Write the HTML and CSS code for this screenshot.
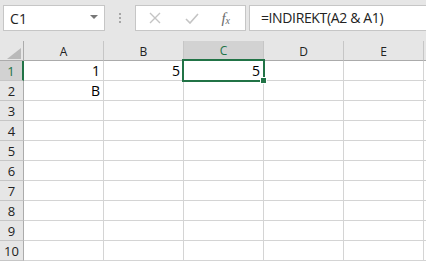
FILE: index.html
```html
<!DOCTYPE html>
<html>
<head>
<meta charset="utf-8">
<link rel="stylesheet" href="styles.css">
</head>
<body>
<div class="app">
  <div class="toolbar">
    <div class="namebox">
      <span class="name">C1</span>
      <svg class="dd" width="8" height="4" viewBox="0 0 8 4"><polygon points="0,0 8,0 4,4" fill="#777"/></svg>
    </div>
    <div class="sep"><span></span><span></span><span></span></div>
    <div class="fbtns">
      <svg class="ic-x" width="12" height="12" viewBox="0 0 12 12"><path d="M1 1 L11 11 M11 1 L1 11" stroke="#c4c4c4" stroke-width="1.4" fill="none"/></svg>
      <svg class="ic-ok" width="14" height="11" viewBox="0 0 14 11"><path d="M1 6 L5 10 L13 1" stroke="#c4c4c4" stroke-width="1.6" fill="none"/></svg>
      <span class="fx">f<sub>x</sub></span>
    </div>
    <div class="formula">=INDIREKT(A2 &amp; A1)</div>
  </div>
  <div class="sheet">
    <div class="grid">
      <div class="hd corner"><svg width="14" height="11" viewBox="0 0 14 11"><polygon points="14,0 14,11 0,11" fill="#b9b9b9"/></svg></div>
      <div class="hd col">A</div>
      <div class="hd col">B</div>
      <div class="hd col sel">C</div>
      <div class="hd col">D</div>
      <div class="hd col">E</div>
      <div class="hd col last"></div>

      <div class="hd row rsel">1</div>
      <div class="c">1</div><div class="c">5</div><div class="c">5</div><div class="c"></div><div class="c"></div><div class="c last"></div>

      <div class="hd row">2</div>
      <div class="c">B</div><div class="c"></div><div class="c"></div><div class="c"></div><div class="c"></div><div class="c last"></div>

      <div class="hd row">3</div>
      <div class="c"></div><div class="c"></div><div class="c"></div><div class="c"></div><div class="c"></div><div class="c last"></div>

      <div class="hd row">4</div>
      <div class="c"></div><div class="c"></div><div class="c"></div><div class="c"></div><div class="c"></div><div class="c last"></div>

      <div class="hd row">5</div>
      <div class="c"></div><div class="c"></div><div class="c"></div><div class="c"></div><div class="c"></div><div class="c last"></div>

      <div class="hd row">6</div>
      <div class="c"></div><div class="c"></div><div class="c"></div><div class="c"></div><div class="c"></div><div class="c last"></div>

      <div class="hd row">7</div>
      <div class="c"></div><div class="c"></div><div class="c"></div><div class="c"></div><div class="c"></div><div class="c last"></div>

      <div class="hd row">8</div>
      <div class="c"></div><div class="c"></div><div class="c"></div><div class="c"></div><div class="c"></div><div class="c last"></div>

      <div class="hd row">9</div>
      <div class="c"></div><div class="c"></div><div class="c"></div><div class="c"></div><div class="c"></div><div class="c last"></div>

      <div class="hd row">10</div>
      <div class="c"></div><div class="c"></div><div class="c"></div><div class="c"></div><div class="c"></div><div class="c last"></div>
    </div>
    <div class="selection"><div class="handle"></div></div>
  </div>
</div>
</body>
</html>
```

FILE: styles.css
```css
* { box-sizing: border-box; }
html, body { margin: 0; padding: 0; }
body {
  width: 426px;
  height: 262px;
  overflow: hidden;
  background: #fff;
  font-family: "Open Sans", "Noto Sans", sans-serif;
  color: #000;
}
.app { width: 426px; }
.toolbar {
  height: 41px;
  background: #e6e6e6;
  display: flex;
  align-items: flex-start;
  padding: 5px 0 0 3px;
}
.namebox {
  width: 102px;
  height: 26px;
  background: #fff;
  border: 1px solid #c6c6c6;
  display: flex;
  align-items: center;
  justify-content: space-between;
  padding: 0 6px 0 6px;
}
.name { font-size: 14px; color: #222; letter-spacing: 0.2px; }
.dd { margin-top: -2px; }
.sep {
  width: 31px;
  height: 26px;
  display: flex;
  flex-direction: column;
  align-items: center;
  justify-content: center;
  gap: 2px;
}
.sep span { width: 2px; height: 2px; background: #a6a6a6; display: block; }
.fbtns {
  width: 111px;
  height: 26px;
  background: #fff;
  border: 1px solid #c6c6c6;
  display: flex;
  align-items: center;
  padding-left: 13px;
}
.ic-x { margin-right: 24px; }
.ic-ok { margin-right: 22px; }
.fx {
  font-family: "Liberation Serif", serif;
  font-style: italic;
  font-size: 15px;
  color: #6a6a6a;
  line-height: 1;
}
.fx sub { font-size: 10px; vertical-align: -1px; }
.formula {
  margin-left: 3px;
  width: 178px;
  height: 26px;
  background: #fff;
  border: 1px solid #c6c6c6;
  border-right: none;
  font-size: 14px;
  letter-spacing: -0.35px;
  color: #222;
  padding-left: 11px;
  line-height: 24px;
  white-space: nowrap;
  overflow: hidden;
}
.sheet { position: relative; }
.grid {
  display: grid;
  grid-template-columns: 24px repeat(5, 80px) 2px;
  grid-auto-rows: 20px;
}
.hd {
  background: #e6e6e6;
  font-family: "Open Sans", "Noto Sans", sans-serif;
  font-size: 12px;
  color: #222;
  display: flex;
  align-items: center;
  justify-content: center;
}
.corner {
  border-right: 1px solid #ababab;
  border-bottom: 1px solid #ababab;
  align-items: flex-end;
  justify-content: flex-end;
  padding: 0 2px 1px 0;
}
.col {
  border-right: 1px solid #c6c6c6;
  border-bottom: 1px solid #ababab;
  padding-top: 1px;
}
.col.sel { background: #d2d2d2; color: #217346; border-bottom: 2px solid #217346; }
.col.last { border-right: none; }
.row {
  border-right: 1px solid #ababab;
  border-bottom: 1px solid #c6c6c6;
  justify-content: center;
  font-size: 13px;
}
.row.rsel { background: #d2d2d2; color: #217346; border-right: 2px solid #217346; }
.c {
  border-right: 1px solid #d4d4d4;
  border-bottom: 1px solid #d4d4d4;
  font-family: "Open Sans", "Noto Sans", sans-serif;
  font-size: 14px;
  text-align: right;
  padding-right: 3px;
  line-height: 19px;
}
.c.last { border-right: none; }
.selection {
  position: absolute;
  left: 182px;
  top: 18px;
  width: 83px;
  height: 23px;
  border: 2px solid #217346;
}
.handle {
  position: absolute;
  right: -4px;
  bottom: -4px;
  width: 7px;
  height: 7px;
  background: #217346;
  border: 1px solid #fff;
}
```
